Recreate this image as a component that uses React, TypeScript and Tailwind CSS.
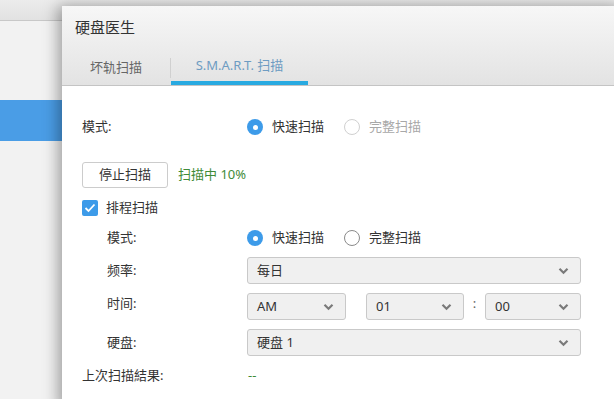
import React from "react";

const font = { fontFamily: '"Noto Sans", "Noto Sans CJK SC", sans-serif' };

function Chevron() {
  return (
    <svg width="11" height="8" viewBox="0 0 11 8" className="shrink-0">
      <polyline points="1.5,1.8 5.5,5.8 9.5,1.8" fill="none" stroke="#7a7a7a" strokeWidth="2.2" />
    </svg>
  );
}

function Select({ value, className = "" }: { value: string; className?: string }) {
  return (
    <div
      className={`h-[27px] flex items-center justify-between pl-[9px] pr-[11px] bg-[#f0f0f0] border border-[#c9c9c9] rounded-[3px] text-[13px] text-[#333] ${className}`}
    >
      <span>{value}</span>
      <Chevron />
    </div>
  );
}

function Radio({ checked, disabled }: { checked?: boolean; disabled?: boolean }) {
  if (checked) {
    return (
      <span className="w-4 h-4 rounded-full bg-[#3d9be9] flex items-center justify-center shrink-0">
        <span className="w-[5px] h-[5px] rounded-full bg-white" />
      </span>
    );
  }
  return (
    <span
      className={`block w-4 h-4 rounded-full bg-white border shrink-0 ${disabled ? "border-[#d0d0d0]" : "border-[#8a8a8a]"}`}
    />
  );
}

function ModeOptions({ disabledFull }: { disabledFull?: boolean }) {
  return (
    <div className="flex items-center text-[13px]">
      <Radio checked />
      <span className="ml-[9px] text-[#333]">快速扫描</span>
      <span className="ml-[20px] block">
        <Radio disabled={disabledFull} />
      </span>
      <span className={`ml-[9px] ${disabledFull ? "text-[#a8a8a8]" : "text-[#333]"}`}>完整扫描</span>
    </div>
  );
}

export default function App() {
  return (
    <div className="relative w-[614px] h-[399px] overflow-hidden bg-[#f2f2f2]" style={font}>
      {/* background app */}
      <div className="h-[21px] bg-gradient-to-b from-[#ececec] to-[#e2e2e2] border-b border-[#c8c8c8]" />
      <div className="mt-[79px] h-[41px] bg-[#4a9de6]" />

      {/* dialog */}
      <div className="absolute left-[62px] top-[6px] right-[-10px] bottom-[-10px] bg-white shadow-[-4px_0_14px_rgba(0,0,0,0.35)] flex flex-col">
        <div className="h-[80px] bg-gradient-to-b from-[#f7f7f7] to-[#e3e3e3] border-b border-[#c4c4c4] flex flex-col">
          <div className="pl-[13px] pt-[10px] text-[15px] text-[#333] leading-[22px]">硬盘医生</div>
          <div className="mt-auto flex items-end h-[34px]">
            <div className="w-[108px] h-full flex items-center justify-center text-[13px] text-[#666]">
              坏轨扫描
            </div>
            <div className="w-px h-[20px] bg-[#d0d0d0] self-center" />
            <div className="w-[137px] h-full flex flex-col">
              <div className="flex-1 flex items-center justify-center text-[13px] text-[#6e9cc2]">
                S.M.A.R.T. 扫描
              </div>
              <div className="h-[4px] bg-[#29aae1]" />
            </div>
          </div>
        </div>

        <div className="pl-[20px] pr-[43px] flex flex-col text-[13px] text-[#333]">
          <div className="mt-[31px] h-5 flex items-center">
            <span className="w-[165px]">模式:</span>
            <ModeOptions disabledFull />
          </div>

          <div className="mt-[25px] flex items-center">
            <button className="w-[86px] h-[26px] border border-[#cccccc] rounded-[3px] bg-white text-[13px] text-[#333]">
              停止扫描
            </button>
            <span className="ml-[10px] text-[#3f8b38]">扫描中 10%</span>
          </div>

          <div className="mt-[12px] h-4 flex items-center">
            <span className="w-4 h-4 rounded-[2px] bg-[#3d9be9] flex items-center justify-center">
              <svg width="12" height="10" viewBox="0 0 12 10">
                <polyline points="1.5,5 4.5,8 10.5,1.5" fill="none" stroke="white" strokeWidth="1.8" />
              </svg>
            </span>
            <span className="ml-[8px]">排程扫描</span>
          </div>

          <div className="mt-[12px] h-5 flex items-center">
            <span className="w-[165px] pl-[25px]">模式:</span>
            <ModeOptions />
          </div>

          <div className="mt-[9px] flex items-center">
            <span className="w-[165px] pl-[25px]">频率:</span>
            <Select value="每日" className="flex-1" />
          </div>

          <div className="mt-[9px] flex items-center">
            <span className="w-[165px] pl-[25px] -mt-[5px]">时间:</span>
            <Select value="AM" className="w-[99px]" />
            <Select value="01" className="w-[98px] ml-[20px]" />
            <span className="w-[21px] text-center -mt-[6px] text-[#666]">:</span>
            <Select value="00" className="flex-1" />
          </div>

          <div className="mt-[9px] flex items-center">
            <span className="w-[165px] pl-[25px]">硬盘:</span>
            <Select value="硬盘 1" className="flex-1" />
          </div>

          <div className="mt-[10px] h-5 flex items-center">
            <span className="w-[166px]">上次扫描結果:</span>
            <span className="text-[#3f8b38]">--</span>
          </div>
        </div>
      </div>
    </div>
  );
}
